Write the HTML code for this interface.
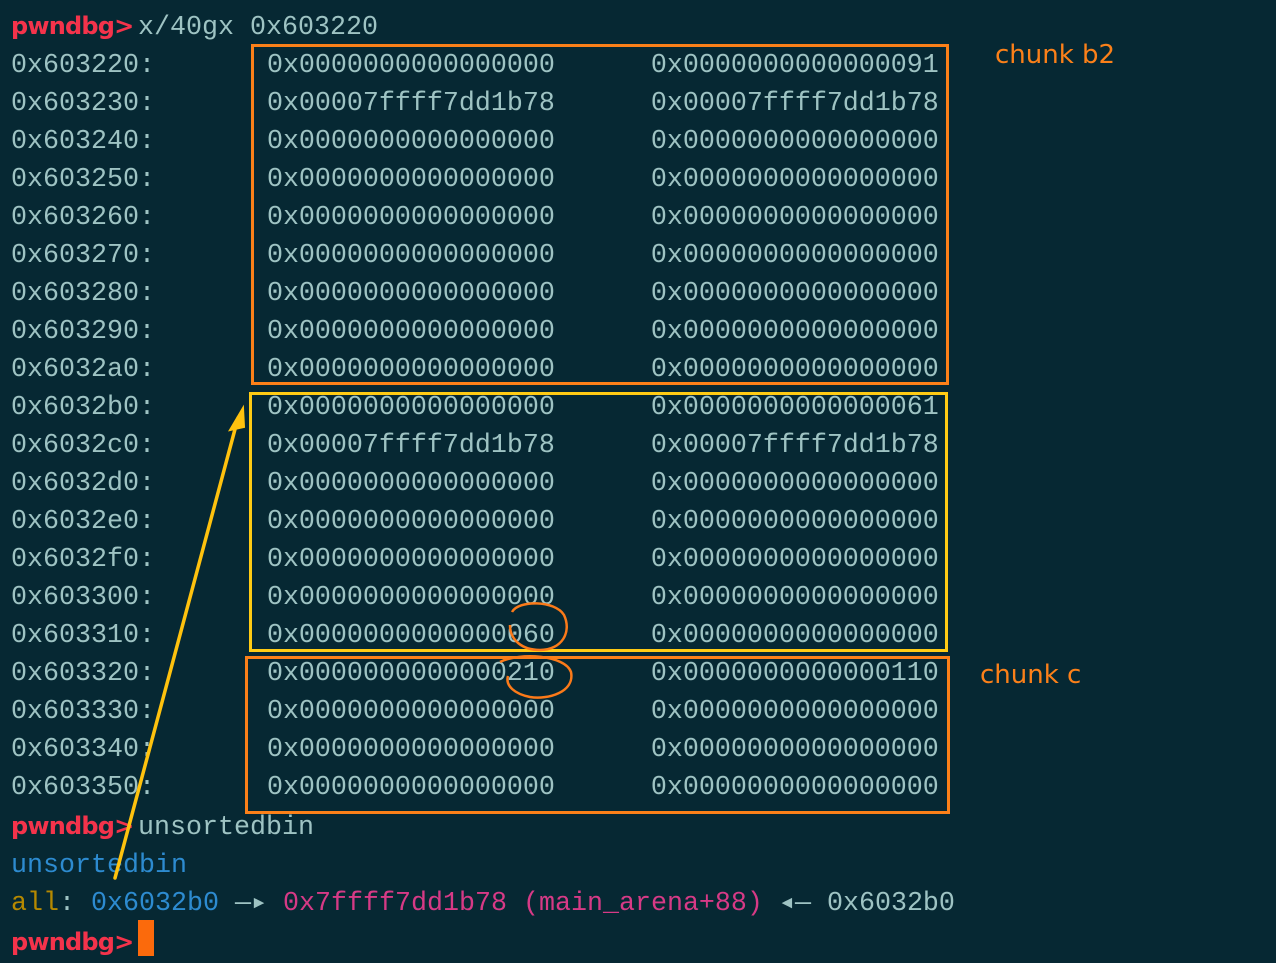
<!DOCTYPE html>
<html><head><meta charset="utf-8"><style>
body{margin:0;width:1276px;height:956px;background:#062833;overflow:hidden;position:relative}
pre{margin:0;position:absolute;left:11px;top:7px;font-family:"Liberation Mono","DejaVu Sans Mono",monospace;font-size:26.67px;line-height:38px;color:#9ec3c3}
.p{color:#f4334b;font-family:"DejaVu Sans","Liberation Sans",sans-serif;font-weight:bold;font-size:24px;letter-spacing:-0.8px;display:inline-block;width:127px}
.b{color:#2d8bd0}.y{color:#b58900}.m{color:#d63a86}
.box{position:absolute;border:3px solid #fb8019;box-sizing:border-box}
.lab{position:absolute;color:#fb8019;font-family:"DejaVu Sans","Liberation Sans",sans-serif;font-size:26px}
</style></head><body>
<pre><span class="p">pwndbg&gt;</span>x/40gx 0x603220
0x603220:       0x0000000000000000      0x0000000000000091
0x603230:       0x00007ffff7dd1b78      0x00007ffff7dd1b78
0x603240:       0x0000000000000000      0x0000000000000000
0x603250:       0x0000000000000000      0x0000000000000000
0x603260:       0x0000000000000000      0x0000000000000000
0x603270:       0x0000000000000000      0x0000000000000000
0x603280:       0x0000000000000000      0x0000000000000000
0x603290:       0x0000000000000000      0x0000000000000000
0x6032a0:       0x0000000000000000      0x0000000000000000
0x6032b0:       0x0000000000000000      0x0000000000000061
0x6032c0:       0x00007ffff7dd1b78      0x00007ffff7dd1b78
0x6032d0:       0x0000000000000000      0x0000000000000000
0x6032e0:       0x0000000000000000      0x0000000000000000
0x6032f0:       0x0000000000000000      0x0000000000000000
0x603300:       0x0000000000000000      0x0000000000000000
0x603310:       0x0000000000000060      0x0000000000000000
0x603320:       0x0000000000000210      0x0000000000000110
0x603330:       0x0000000000000000      0x0000000000000000
0x603340:       0x0000000000000000      0x0000000000000000
0x603350:       0x0000000000000000      0x0000000000000000
<span class="p">pwndbg&gt;</span>unsortedbin
<span class="b">unsortedbin</span>
<span class="y">all</span>: <span class="b">0x6032b0</span> —▸ <span class="m">0x7ffff7dd1b78 (main_arena+88)</span> ◂— 0x6032b0
<span class="p">pwndbg&gt;</span></pre>
<div style="position:absolute;left:138px;top:920px;width:16px;height:36px;background:#fb6a0c"></div>
<div class="box" style="left:251px;top:44px;width:698px;height:341px"></div>
<div class="box" style="left:249px;top:392px;width:699px;height:260px;border-color:#ffcb14"></div>
<div class="box" style="left:245px;top:656px;width:705px;height:158px"></div>
<div class="lab" style="left:995px;top:40px">chunk b2</div>
<div class="lab" style="left:980px;top:660px">chunk c</div>
<svg style="position:absolute;left:0;top:0" width="1276" height="956">
<line x1="115" y1="878" x2="238" y2="418" stroke="#ffc20e" stroke-width="3.5" stroke-linecap="round"/>
<path d="M243 408 L230 430 L244 427 Z" fill="#ffc20e" stroke="#ffc20e" stroke-width="2"/>
<path d="M512 612 C518 600 555 600 564 615 C572 632 562 650 540 650 C522 650 510 640 510 625" fill="none" stroke="#fb7a19" stroke-width="2.5"/>
<path d="M500 662 C520 652 565 655 571 672 C575 692 548 700 530 697 C515 694 505 686 508 676" fill="none" stroke="#fb7a19" stroke-width="2.5"/>
</svg>
</body></html>
